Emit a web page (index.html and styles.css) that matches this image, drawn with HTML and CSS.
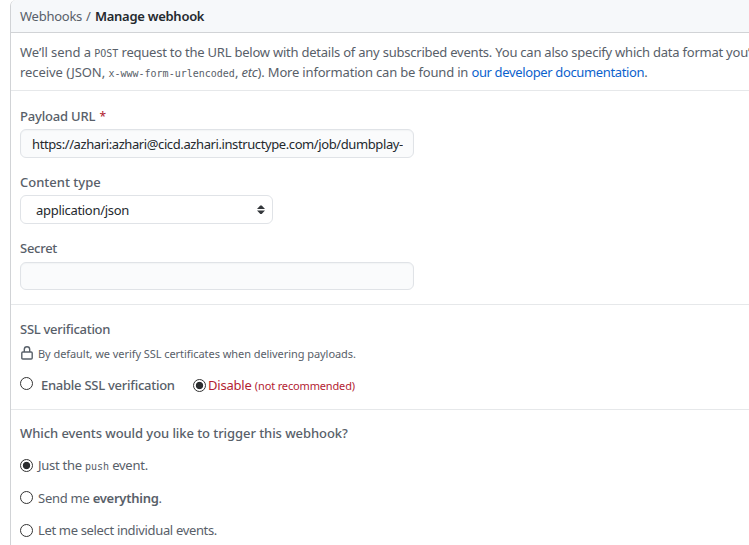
FILE: index.html
```
<!DOCTYPE html>
<html lang="en">
<head><meta charset="utf-8"><title>Manage webhook</title><link rel="stylesheet" href="styles.css"></head>
<body>
<main class="panel">
  <header class="crumb"><span class="parent">Webhooks</span> <span class="slash">/</span> <b class="current">Manage webhook</b></header>
  <section class="intro">
    <p class="line">We’ll send a <code>POST</code><span class="line-a"> request to the URL below with details of any subscribed events. You can also specify which data format you’</span></p>
    <p class="line">receive (JSON, <code>x-www-form-urlencoded</code><span class="line-b">, <em>etc</em>). More information can be found in </span><a>our developer documentation</a>.</p>
  </section>
  <form class="fields">
    <label class="label url-label">Payload URL <span class="required">*</span></label>
    <div class="input"><span class="value">https://azhari:azhari@cicd.azhari.instructype.com/job/dumbplay-</span></div>
    <label class="label">Content type</label>
    <div class="select"><span>application/json</span>
      <svg class="arrows" width="8" height="10" viewBox="0 0 8 10"><path d="M0 4 3.3.5h1.4L8 4zM0 5.5h8L4.7 9H3.3z"/></svg>
    </div>
    <label class="label secret-label">Secret</label>
    <div class="input secret"></div>
  </form>
  <section class="ssl">
    <h2 class="label ssl-title">SSL verification</h2>
    <p class="note"><svg class="lock" width="12" height="14" viewBox="0 0 12 14"><path d="M1.8 6h8.4q1 0 1 1v5q0 1-1 1H1.8q-1 0-1-1V7q0-1 1-1zM3.3 6V3.5a2.7 2.7 0 0 1 5.4 0V6"/></svg><span>By default, we verify SSL certificates when delivering payloads.</span></p>
    <div class="choices">
      <i class="radio raised"></i><span class="enable">Enable SSL verification</span>
      <i class="radio on"></i><span class="danger">Disable <small>(not recommended)</small></span>
    </div>
  </section>
  <section class="events">
    <h2 class="label which">Which events would you like to trigger this webhook?</h2>
    <div class="option"><i class="radio on"></i><span class="just">Just the <code>push</code> event.</span></div>
    <div class="option"><i class="radio"></i><span class="send">Send me <b>everything</b>.</span></div>
    <div class="option"><i class="radio"></i><span class="individual">Let me select individual events.</span></div>
  </section>
</main>
</body>
</html>
```
FILE: styles.css
```
* { box-sizing: border-box; }
body { margin: 0; height: 545px; overflow: hidden; background: #fff; color: #586069; font: 13px/20px "Noto Sans", sans-serif; }
p, h2 { margin: 0; }
.panel { margin-left: 10px; height: 560px; border-left: 1px solid #d1d3d6; border-top-left-radius: 6px; }
.crumb { height: 33px; padding: 6px 9px; background: #f6f8fa; border-bottom: 1px solid #d1d3d6; border-top-left-radius: 6px; white-space: nowrap; display: flex; gap: 4px; }
.parent { letter-spacing: -.25px; }
.current { color: #24292e; font-weight: 600; letter-spacing: -.28px; }
.intro { height: 58px; padding: 9px 0 8px 9px; border-bottom: 1px solid #e6e8ea; overflow: hidden; }
.line { white-space: nowrap; height: 20px; letter-spacing: -.06px; }
.line-a { letter-spacing: -.23px; }
.line-b { letter-spacing: -.18px; }
code { font: 10px/1 "DejaVu Sans Mono", monospace; letter-spacing: 0; }
a { color: #0b62cd; letter-spacing: -.36px; }
.fields { height: 214px; padding: 15px 9px 0; border-bottom: 1px solid #e6e8ea; }
.label { display: block; height: 20px; font-size: 13px; font-weight: 500; }
.url-label { letter-spacing: -.18px; }
.secret-label, .ssl-title { letter-spacing: -.27px; }
.required { color: #b32c3a; margin-left: 1px; font-size: 12px; }
.input { width: 394px; height: 29px; margin: 3px 0 14px; padding: 4px 10px 4px 11px; border: 1px solid #e0e3e7; border-radius: 6px; background: #fafbfc; box-shadow: inset 0 1px 1px #f2f4f6; color: #24292e; white-space: nowrap; overflow: hidden; }
.value { display: block; overflow: hidden; letter-spacing: -.4px; }
.select { display: flex; align-items: center; justify-content: space-between; width: 253px; height: 29px; margin: 3px 0 14px; padding: 1px 7px 0 15px; border: 1px solid #e0e3e7; border-radius: 6px; color: #24292e; letter-spacing: -.3px; }
.arrows { fill: #33373b; }
.secret { height: 28px; margin-top: 4px; }
.ssl { height: 105px; padding: 14px 9px 0; border-bottom: 1px solid #e6e8ea; }
.note { display: flex; align-items: center; gap: 6px; height: 20px; margin-top: 5px; font-size: 11px; letter-spacing: -.06px; }
.lock { fill: none; stroke: #586069; stroke-width: 1.4; position: relative; left: 1px; top: -1px; }
.choices { display: flex; align-items: center; height: 20px; margin-top: 11px; white-space: nowrap; }
.radio { flex: none; width: 13px; height: 13px; border: 1px solid #333; border-radius: 50%; background: #fff; }
.radio.on { background: radial-gradient(circle, #2b2d2f 3.3px, #fff 4.1px); }
.raised { margin-top: -3px; }
.enable { width: 134px; margin: 0 18px 0 8px; font-weight: 500; letter-spacing: -.26px; }
.danger { margin-left: 2px; color: #b31d33; letter-spacing: -.2px; }
small { font-size: 11px; letter-spacing: -.15px; }
.events { padding: 13px 9px 0; }
.option { display: flex; align-items: center; gap: 5px; height: 20px; margin-bottom: 12.5px; }
.which { margin-bottom: 12px; letter-spacing: -.07px; }
.just, .send { letter-spacing: -.26px; }
.individual { letter-spacing: -.34px; }
.option b { font-weight: 600; }
```
